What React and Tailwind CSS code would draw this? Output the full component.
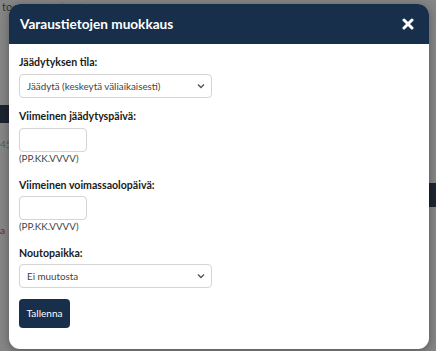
import React from "react"

function SelectBox({ value }) {
  return (
    <div className="flex items-center justify-between w-[193px] h-[24px] border border-[#d4d4d4] rounded-[4px] pl-[7px] pr-[6px] text-[9.8px] text-[#444]">
      <span>{value}</span>
      <svg width="8" height="6" viewBox="0 0 8 6" fill="none" stroke="#555" strokeWidth="1.4">
        <path d="M1 1.5l3 3 3-3" />
      </svg>
    </div>
  )
}

function Label({ children, className = "" }) {
  return <div className={"font-bold text-[10.6px] text-[#1a1a1a] leading-[13px] " + className}>{children}</div>
}

function DateField({ label, gap }) {
  return (
    <div className="flex flex-col">
      <Label>{label}</Label>
      <div className={"w-[68px] h-[24px] border border-[#d4d4d4] rounded-[4px] " + gap} />
      <div className="text-[9.8px] text-[#444] leading-[13px]">(PP.KK.VVVV)</div>
    </div>
  )
}

function App() {
  return (
    <div className="relative w-[436px] h-[351px] overflow-hidden bg-[#858585] font-['Lato',sans-serif]">
      {/* dimmed page behind the modal */}
      <div className="flex flex-col w-full h-full">
        <div className="flex gap-[40px] px-[2px] h-[14px] text-[11px] text-[#333] leading-[14px]">
          <span>to</span>
          <span className="text-[#7a7a7a]">Vihreä</span>
        </div>
        <div className="mt-[91px] h-[18px] w-[9px] bg-[#1c2430]" />
        <div className="mt-[16px] text-[10px] text-[#3f6a48] leading-[10px]">45</div>
        <div className="mt-[76px] text-[10px] text-[#6a2a2a] leading-[10px]">a</div>
      </div>
      <div className="absolute right-0 top-[183px] w-[7px] h-[24px] bg-[#1c2430]" />

      <div className="absolute left-[9px] top-[4px] w-[420px] h-[345px] rounded-[11px] bg-white overflow-hidden shadow-[0_2px_8px_rgba(0,0,0,0.35)] flex flex-col">
        <div className="h-[40px] bg-[#172f4b] flex items-center justify-between pl-[11px] pr-[15px]">
          <div className="text-white font-bold text-[13.6px]">Varaustietojen muokkaus</div>
          <svg width="12" height="12" viewBox="0 0 12 12" stroke="white" strokeWidth="3" strokeLinecap="round">
            <path d="M2 2l8 8M10 2l-8 8" />
          </svg>
        </div>
        <div className="flex flex-col px-[10px] pt-[12px]">
          <Label>Jäädytyksen tila:</Label>
          <div className="mt-[5px]">
            <SelectBox value="Jäädytä (keskeytä väliaikaisesti)" />
          </div>
          <div className="mt-[12px]">
            <DateField label="Viimeinen jäädytyspäivä:" gap="mt-[5px]" />
          </div>
          <div className="mt-[14px]">
            <DateField label="Viimeinen voimassaolopäivä:" gap="mt-[4px]" />
          </div>
          <Label className="mt-[14px]">Noutopaikka:</Label>
          <div className="mt-[4px]">
            <SelectBox value="Ei muutosta" />
          </div>
          <div className="mt-[11px]">
            <div className="inline-flex items-center justify-center w-[51px] h-[29px] rounded-[4px] bg-[#172f4b] text-white text-[10px]">
              Tallenna
            </div>
          </div>
        </div>
      </div>
    </div>
  )
}

export default App
